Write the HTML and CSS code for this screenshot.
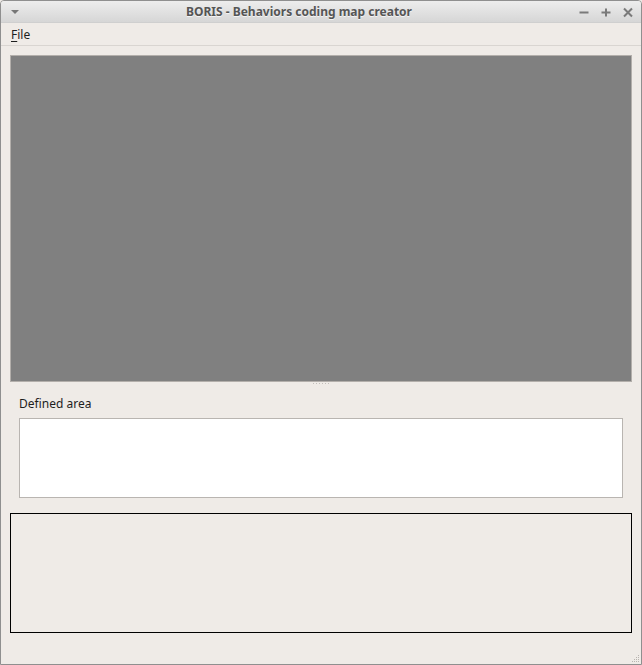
FILE: index.html
```html
<!DOCTYPE html>
<html>
<head>
<meta charset="utf-8">
<link rel="stylesheet" href="styles.css">
</head>
<body>
<div class="window">
  <div class="titlebar">
    <svg class="menu-arrow" width="10" height="6" viewBox="0 0 10 6"><path d="M1 1 L9 1 L5 5 Z" fill="#777"/></svg>
    <div class="title">BORIS - Behaviors coding map creator</div>
    <div class="controls">
      <svg width="12" height="12" viewBox="0 0 12 12"><path d="M1.5 6.5 H10.5" stroke="#7a7a7a" stroke-width="2"/></svg>
      <svg width="12" height="12" viewBox="0 0 12 12"><path d="M1.5 6.5 H10.5 M6 2.5 V10.5" stroke="#7a7a7a" stroke-width="2"/></svg>
      <svg width="12" height="12" viewBox="0 0 12 12"><path d="M2 2.5 L10 10.5 M10 2.5 L2 10.5" stroke="#7a7a7a" stroke-width="2"/></svg>
    </div>
  </div>
  <div class="menubar">
    <span class="menu-item"><span class="mnemonic">F</span>ile</span>
  </div>
  <div class="content">
    <div class="view"></div>
    <div class="splitter"><span class="dots"></span></div>
    <div class="area-section">
      <div class="label">Defined area</div>
      <div class="area-box"></div>
    </div>
    <div class="framed"></div>
    <div class="grip">
      <svg width="8" height="8" viewBox="0 0 8 8">
        <rect x="6" y="0" width="1" height="1" fill="#b8b4b0"/>
        <rect x="4" y="2" width="1" height="1" fill="#b8b4b0"/>
        <rect x="6" y="2" width="1" height="1" fill="#b8b4b0"/>
        <rect x="2" y="4" width="1" height="1" fill="#b8b4b0"/>
        <rect x="4" y="4" width="1" height="1" fill="#b8b4b0"/>
        <rect x="6" y="4" width="1" height="1" fill="#b8b4b0"/>
        <rect x="0" y="6" width="1" height="1" fill="#b8b4b0"/>
        <rect x="2" y="6" width="1" height="1" fill="#b8b4b0"/>
        <rect x="4" y="6" width="1" height="1" fill="#b8b4b0"/>
        <rect x="6" y="6" width="1" height="1" fill="#b8b4b0"/>
      </svg>
    </div>
  </div>
</div>
</body>
</html>
```

FILE: styles.css
```css
html, body {
  margin: 0;
  padding: 0;
  background: #efebe7;
}
.window {
  width: 642px;
  height: 665px;
  box-sizing: border-box;
  border: 1px solid #8f8f8f;
  border-radius: 4px 4px 0 0;
  background: #efebe7;
  display: flex;
  flex-direction: column;
  font-family: "Noto Sans", "Open Sans", sans-serif;
  font-size: 12px;
  color: #1e1e1e;
  overflow: hidden;
}
.titlebar {
  height: 21px;
  flex: none;
  display: flex;
  align-items: center;
  background: linear-gradient(#ededed, #d6d6d6);
  border-bottom: 1px solid #cfcfcf;
}
.menu-arrow {
  margin-left: 9px;
  flex: none;
}
.title {
  flex: 1;
  text-align: center;
  font-weight: bold;
  font-size: 12px;
  color: #555555;
  text-shadow: 0 1px 0 #f4f4f4;
  line-height: 21px;
  white-space: nowrap;
}
.controls {
  margin-right: 7px;
  display: flex;
  gap: 10px;
  flex: none;
}
.controls svg {
  display: block;
}
.menubar {
  height: 22px;
  flex: none;
  display: flex;
  align-items: center;
  border-bottom: 1px solid #d9d5d1;
}
.menu-item {
  margin-left: 10px;
  font-size: 12px;
  color: #1e1e1e;
}
.mnemonic {
  text-decoration: underline;
  text-underline-offset: 2px;
}
.content {
  flex: 1;
  display: flex;
  flex-direction: column;
  padding: 9px 9px 0 9px;
}
.view {
  height: 325px;
  flex: none;
  background: #808080;
  border: 1px solid #b3afab;
}
.splitter {
  height: 6px;
  flex: none;
  display: flex;
  justify-content: center;
  align-items: flex-start;
}
.dots {
  width: 17px;
  height: 1px;
  margin-top: 1px;
  background: repeating-linear-gradient(90deg, #c2beba 0 1px, transparent 1px 3px);
}
.area-section {
  padding: 8px 9px 15px 9px;
  flex: none;
}
.label {
  height: 22px;
  line-height: 16px;
  font-size: 12px;
  color: #1e1e1e;
}
.area-box {
  height: 78px;
  background: #ffffff;
  border: 1px solid #b9b5b1;
}
.framed {
  height: 118px;
  flex: none;
  border: 1px solid #000;
  background: #efebe7;
}
.grip {
  flex: 1;
  display: flex;
  justify-content: flex-end;
  align-items: flex-end;
  margin-right: -8px;
}
.grip svg {
  display: block;
  margin-bottom: 1px;
}
```
